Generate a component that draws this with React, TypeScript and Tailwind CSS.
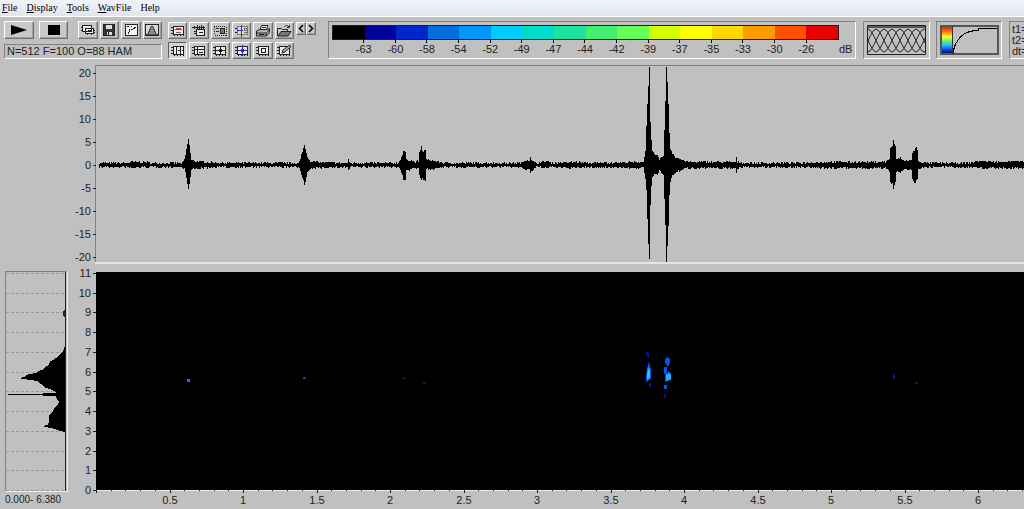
import React from 'react';

const MENU = ['File', 'Display', 'Tools', 'WavFile', 'Help'];

const SCALE = [
  { color: 'bg-black', label: '-63' },
  { color: 'bg-[#00009a]', label: '-60' },
  { color: 'bg-[#0026cc]', label: '-58' },
  { color: 'bg-[#0070dc]', label: '-54' },
  { color: 'bg-[#0098ff]', label: '-52' },
  { color: 'bg-[#00ccff]', label: '-49' },
  { color: 'bg-[#00dccc]', label: '-47' },
  { color: 'bg-[#1ce4a0]', label: '-44' },
  { color: 'bg-[#44ec70]', label: '-42' },
  { color: 'bg-[#66ff55]', label: '-39' },
  { color: 'bg-[#d4ff00]', label: '-37' },
  { color: 'bg-[#ffff00]', label: '-35' },
  { color: 'bg-[#ffd800]', label: '-33' },
  { color: 'bg-[#ff9c00]', label: '-30' },
  { color: 'bg-[#ff5000]', label: '-26' },
  { color: 'bg-[#e60000]', label: '' },
];

// x, amplitude above zero, amplitude below zero (pixels)
const ENVELOPE: [number, number, number][] = [
  [99, 2, 2], [125, 2, 2], [133, 3, 3], [146, 3, 2], [150, 2, 2], [182, 2, 2],
  [184, 5, 4], [185, 10, 8], [186, 16, 13], [187, 20, 18], [188, 26, 25], [189, 20, 20], [190, 12, 12], [191, 5, 5], [193, 4, 4], [205, 3, 3], [220, 2, 2],
  [298, 2, 2], [300, 6, 5], [301, 10, 9], [303, 16, 16], [304, 21, 20], [305, 16, 17], [307, 8, 8], [310, 4, 4], [316, 3, 3], [340, 2, 2],
  [347, 2, 2], [348, 5, 5], [350, 2, 2], [398, 2, 2],
  [400, 6, 5], [402, 10, 10], [403, 14, 15], [405, 13, 14], [406, 5, 5], [411, 5, 5], [414, 3, 2], [418, 4, 4],
  [419, 12, 10], [421, 18, 15], [422, 13, 14], [425, 15, 16], [426, 5, 4], [433, 4, 4], [445, 2, 2], [521, 2, 2],
  [525, 5, 5], [529, 5, 4], [530, 9, 9], [531, 4, 6], [536, 2, 2], [548, 4, 3], [550, 2, 2], [574, 3, 3], [590, 2, 2], [643, 3, 3],
  [645, 14, 14], [646, 38, 26], [647, 62, 54], [648, 80, 78], [649, 97, 94], [650, 42, 39], [651, 24, 22], [652, 14, 12],
  [655, 9, 9], [657, 11, 10], [659, 5, 5], [663, 9, 10], [664, 36, 34], [665, 64, 60], [666, 97, 97], [667, 82, 82],
  [668, 62, 60], [669, 32, 30], [670, 16, 17], [672, 12, 10], [675, 8, 7], [680, 6, 6], [686, 3, 3], [720, 3, 3],
  [735, 3, 3], [736, 7, 7], [737, 3, 3], [745, 2, 2], [800, 2, 2], [820, 3, 3], [885, 3, 3],
  [889, 6, 6], [890, 17, 17], [892, 19, 19], [893, 25, 23], [894, 20, 20], [895, 18, 18], [896, 6, 6], [900, 7, 7],
  [904, 4, 4], [911, 5, 5], [912, 13, 13], [914, 14, 18], [916, 18, 16], [917, 14, 14], [918, 4, 4], [924, 2, 2],
  [970, 2, 2], [978, 4, 3], [998, 3, 3], [1008, 4, 3], [1030, 3, 3],
];

function wavePath() {
  let seed = 7;
  const rand = () => {
    seed = (seed * 16807) % 2147483647;
    return seed / 2147483647;
  };
  let d = '';
  let i = 0;
  for (let x = 99; x < 1030; x++) {
    while (ENVELOPE[i + 1][0] < x) i++;
    const [x0, u0, d0] = ENVELOPE[i];
    const [x1, u1, d1] = ENVELOPE[i + 1];
    const t = (x - x0) / (x1 - x0);
    const up = Math.max(1, Math.round(u0 + (u1 - u0) * t + (rand() - 0.5) * 2));
    const down = Math.max(1, Math.round(d0 + (d1 - d0) * t + (rand() - 0.5) * 2));
    d += `M${x} ${165 - up}h1v${up + down}h-1z`;
  }
  return d;
}

const WAVE = wavePath();

const freqY = (f: number) => Math.round(490 - f * 19.75);
const timeX = (t: number) => Math.round(96 + t * 147);

const PANEL = 'shrink-0 border border-t-[#808080] border-l-[#808080] border-r-white border-b-white';
const RAISED =
  'flex items-center justify-center bg-[#c8c8c8] border border-t-white border-l-white border-r-[#707070] border-b-[#707070] shadow-[inset_-1px_-1px_0_#a0a0a0]';

type ToolProps = { label: string; children: React.ReactNode; pressed?: boolean; size?: string };

const Tool: React.FC<ToolProps> = ({ label, children, pressed, size = 'h-[17px]' }) => (
  <button
    type="button"
    aria-label={label}
    className={
      pressed
        ? `flex items-center justify-center bg-[#d4d4d4] border border-t-[#606060] border-l-[#606060] border-r-white border-b-white ${size}`
        : `${RAISED} ${size}`
    }
  >
    <svg className="shrink-0" width="16" height="14" viewBox="0 0 16 14" fill="none" stroke="#222" shapeRendering="crispEdges">
      {children}
    </svg>
  </button>
);

// plot frame with axis ticks that most of the tool icons are based on
const Frame = () => (
  <>
    <path fill="#eee" d="M3.5 2.5h10v8h-10z" />
    <path d="M1 3.5h2M1 6.5h2M1 9.5h2M4.5 11v1M7.5 11v1M10.5 11v1M13.5 11v1" />
  </>
);

const MenuBar = () => (
  <nav className="flex h-4 gap-[9px] bg-gradient-to-b from-[#f2f3fa] to-[#e2e4ee] pl-0.5 font-['Liberation_Serif',serif] text-[10px] leading-4 text-black">
    {MENU.map((m) => (
      <button key={m} type="button">
        {m === 'Help' ? m : <><span className="underline">{m[0]}</span>{m.slice(1)}</>}
      </button>
    ))}
  </nav>
);

const LeftTools = () => (
  <div className="w-[158px] shrink-0">
    <div className="flex justify-between">
      <div className="flex gap-[5px]">
        <button type="button" aria-label="Play" className={`${RAISED} h-[18px] w-[30px]`}>
          <svg width="18" height="10"><path d="M1 0v10L17 5z" /></svg>
        </button>
        <button type="button" aria-label="Stop" className={`${RAISED} h-[18px] w-[29px]`}>
          <svg width="12" height="10"><path d="M0 0h12v10H0z" /></svg>
        </button>
      </div>
      <div className="grid w-[84px] grid-cols-4 gap-0.5">
        <Tool label="Copy" size="h-[18px]">
          <path fill="#eee" d="M2.5 2.5h9v6h-9zM5.5 5.500h8v5h-8z" />
          <path d="M1 4.5h2M1 7.5h2M8 7.5h4M7.5 11v1M11.5 11v1M14 7.5h1M14 9.5h1" />
        </Tool>
        <Tool label="Save" size="h-[18px]">
          <path fill="#333" d="M2.5 1.5h11v11h-11z" />
          <path fill="#ddd" stroke="none" d="M5 2h6v4H5zM6 9h5v3H6z" />
          <path d="M7.5 9v3" />
        </Tool>
        <Tool label="Curve" size="h-[18px]">
          <path fill="#f4f4f4" d="M2.5 1.5h12v11h-12z" />
          <path d="M5.5 11V9M6.5 9V6M7.5 6.500h2M9.5 5.5h2M11 4.5h2M4 3.5h2M8 3.5h1" />
        </Tool>
        <Tool label="Window function" size="h-[18px]">
          <path fill="#ddd" d="M1.5 1.5h13v11h-13z" />
          <path fill="#888" shapeRendering="auto" d="M2 12c3 0 4-9 6-9s3 9 6 9z" />
        </Tool>
      </div>
    </div>
    <output className={`${PANEL} mt-[5px] block h-[15px] pl-0.5 leading-[13px]`}>N=512 F=100 O=88 HAM</output>
  </div>
);

const ViewTools = () => (
  <div className="mt-px grid w-[126px] shrink-0 grid-cols-6 gap-x-0.5 gap-y-[3px]">
    <Tool label="Title"><Frame /><path stroke="#d03030" d="M6 4.5h5M5 5.5h7" /><path stroke="#666" d="M6 8.5h5" /></Tool>
    <Tool label="Markers">
      <path fill="#eee" d="M5.5 5.5h8v6h-8z" />
      <path d="M1 3.5h13M3.5 2v3M6.5 1v4M8.5 2v3M10.5 1v4M12.5 2v3M3 7.5h2M3 9.5h2M8 8.5h4" />
    </Tool>
    <Tool label="Select region">
      <path strokeDasharray="1 1" d="M2 2.500h12M2.500 3v8M14.500 3v9M3 11.5h12" />
      <path fill="#777" d="M8.5 4.5h4v5h-4z" />
      <path d="M4 4.5h3M4 7.5h3" />
    </Tool>
    <Tool label="Synchronize">
      <path fill="#ddd" stroke="#777" d="M3.5 2.5h10v8h-10z" />
      <path d="M1 4.5h2M1 8.5h2" />
      <path stroke="#3030d0" d="M7.5 1v12M3 6.5h6" />
      <path stroke="#666" d="M13 4.5h-3v2h3v2h-3" />
    </Tool>
    <Tool label="Print">
      <g shapeRendering="auto">
        <path fill="#eee" d="M5 6l1.500-4.500H13L11.500 6z" />
        <path fill="#aaa" d="M1.500 7l3-1.500h8l2-1v4l-3 3.500h-10zM2 9h9l3.500-3M11 9v3" />
        <path d="M7 3.500h4M4 10.500h5" />
      </g>
    </Tool>
    <Tool label="Open">
      <g shapeRendering="auto">
        <path fill="#ccc" d="M1.500 12V4.500h4l1 1h5v2" />
        <path fill="#777" d="M2 12l3-4.500h10L12 12z" />
        <path d="M8.500 3c1-2 3-2 4.500 0M13.500 1v2.500H11" />
      </g>
    </Tool>
    <Tool label="Vertical cursors" pressed><Frame /><path d="M6.5 2v9M10.5 2v9M8 6.5h2M12 6.5h1" /></Tool>
    <Tool label="Horizontal cursor"><Frame /><path d="M3 5.5h10M6.5 3v7M8 8.5h4" /></Tool>
    <Tool label="Cross cursor"><Frame /><path d="M8.5 2v9M4 6.5h9M7 5.5h3M7 7.5h3" /></Tool>
    <Tool label="Linked cursor"><Frame /><path stroke="#2828c0" d="M8.5 1v11M3 6.5h11M7 5.5h3M7 7.5h3" /></Tool>
    <Tool label="Zoom box"><Frame /><path d="M6.5 4.5h4v4h-4z" /></Tool>
    <Tool label="Annotate">
      <Frame />
      <path shapeRendering="auto" fill="#aaa" d="M6 9l1-3 6.500-5L15 2.500 9 8z" />
    </Tool>
  </div>
);

const ColorScale = () => (
  <div className={`${PANEL} ml-3 h-[38px] w-[528px] pt-[3px] pl-[3px]`}>
    <div className="grid h-[15px] w-[507px] grid-cols-16 border border-[#202020]">
      {SCALE.map((s) => <div key={s.color} className={s.color} />)}
    </div>
    <div className="flex pl-4">
      <div className="grid w-[474px] grid-cols-15">
        {SCALE.slice(0, 15).map((s) => (
          <div key={s.label} className="flex flex-col items-center leading-3">
            <span className="h-[3px] w-px bg-black" />
            {s.label}
          </div>
        ))}
      </div>
      <span className="ml-[17px] pt-[3px] leading-3">dB</span>
    </div>
  </div>
);

function overlapCurves() {
  const curves: string[] = [];
  for (let i = -4; i < 8; i++) {
    const x = i * 8 + 1;
    curves.push(`M${x} 27C${x + 5} 27 ${x + 11} 4 ${x + 16} 4S${x + 27} 27 ${x + 32} 27`);
  }
  return curves.join('');
}

const OverlapPanel = () => (
  <div className={`${PANEL} ml-[7px] h-[38px] w-[67px] p-[3px]`}>
    <svg width="59" height="30" role="img" aria-label="Window overlap" fill="none" stroke="#222">
      <path d={overlapCurves()} />
      <path stroke="#555" strokeWidth="2" d="M0 2h59" />
      <path d="M.5.5h58v29H.5z" />
    </svg>
  </div>
);

const CurvePanel = () => (
  <div className={`${PANEL} ml-1.5 h-[38px] w-[66px] p-[3px]`}>
    <svg width="60" height="30" role="img" aria-label="Colour curve">
      <defs>
        <linearGradient id="rainbow" x1="0" y1="0" x2="0" y2="1">
          <stop offset="0" stopColor="#e01000" />
          <stop offset=".2" stopColor="#ff7020" />
          <stop offset=".38" stopColor="#ffff20" />
          <stop offset=".55" stopColor="#50f090" />
          <stop offset=".7" stopColor="#20b8ff" />
          <stop offset=".85" stopColor="#1040e0" />
          <stop offset="1" stopColor="#000060" />
        </linearGradient>
      </defs>
      <path fill="url(#rainbow)" d="M1 1h11v28H1z" />
      <g fill="none" stroke="#333" shapeRendering="crispEdges">
        <path strokeWidth="2" stroke="#555" d="M1 29V1h57v28z" />
        <path d="M12.5 1v28" />
        <path stroke="#000" d="M13.5 28v-3l1-3 1-3 2-3 2-3 2-2 2-1.500 3-2h2v-1h4v-1.500h6v-1.500h18" />
      </g>
    </svg>
  </div>
);

const Toolbar = () => (
  <header className="flex h-[46px] overflow-hidden border-t border-white bg-[#c0c0c0] pt-1 pl-1">
    <LeftTools />
    <div className="ml-1.5 flex shrink-0 items-start gap-0.5">
      <ViewTools />
      <div className="mt-px flex">
        {['Previous', 'Next'].map((name) => (
          <button key={name} type="button" aria-label={name} className={`${RAISED} h-[13px] w-2.5`}>
            <svg className="shrink-0" width="6" height="9" fill="none" stroke="#000" strokeWidth="1.5">
              <path d={name === 'Next' ? 'M1 1l3.5 3.5L1 8' : 'M5 1L1.500 4.500 5 8'} />
            </svg>
          </button>
        ))}
      </div>
    </div>
    <ColorScale />
    <OverlapPanel />
    <CurvePanel />
    <div className={`${PANEL} ml-[7px] h-[38px] w-24 pt-0.5 pl-0.5 leading-[11px]`}>
      <div>t1=</div>
      <div>t2=</div>
      <div>dt=</div>
    </div>
  </header>
);

const Waveform = () => (
  <svg className="block h-[206px] w-full" role="img" aria-label="Waveform" shapeRendering="crispEdges">
    <g transform="translate(0 -62)">
      <path fill="#808080" d="M95 65h2000v1H95zM95 65h1v197h-1z" />
      <path fill="#e4e4e4" d="M95 262h2000v2H95z" />
      {[20, 15, 10, 5, 0, -5, -10, -15, -20].map((v) => {
        const y = 165 - Math.round(v * 4.6);
        return (
          <g key={v} fill="#222">
            <path d={`M93 ${y}h3v1h-3z`} />
            <text x="91" y={y + 4} textAnchor="end">{v}</text>
          </g>
        );
      })}
      <path d={WAVE} />
    </g>
  </svg>
);

const Spectrum = () => (
  <div className="w-[70px] shrink-0">
    <svg className="block h-[225px] w-full" role="img" aria-label="Average spectrum" shapeRendering="crispEdges">
      <g transform="translate(0 -268)">
        <path stroke="#999" strokeDasharray="3 2" d={Array.from({ length: 12 }, (_, f) => `M6 ${freqY(f)}.5h59`).join('')} />
        <path fill="#808080" d="M5 271h62v1H5zM5 271h1v220H5z" />
        <path fill="#eee" d="M67 271h1v221h-1zM5 491h63v1H5z" />
        <path fill="#222" d="M65 272h1v219h-1zM63 312l1-2h1v7h-1l-1-2z" />
        <path d="M65 346L63 352 60 354 58 357 55 358 53 360 50 361 49 365 45 367 42 370 38 371 36 373 30 374 26 375 24 377 19 378 23 379 30 380 37 381 39 383 43 385 45 388 50 389 54 391 56 393H43V394H8V395H43V396H56L57 399 59 402 58 405 55 407 53 411 50 414 49 417V422L48 425 42 426 50 428 55 429 60 431 65 432z" />
      </g>
    </svg>
    <div className="pl-[5px] text-[10px] leading-[14px] whitespace-nowrap">0.000- 6.380</div>
  </div>
);

const Spectrogram = () => (
  <svg className="block h-[241px] min-w-0 flex-1" role="img" aria-label="Spectrogram" shapeRendering="crispEdges">
    <defs>
      <filter id="soft"><feGaussianBlur stdDeviation=".6" /></filter>
    </defs>
    <g transform="translate(-70 -268)">
      <path d="M96 272h2000v218H96z" />
      <path fill="#eee" d="M96 490h2000v1H96z" />
      <g fill="#222">
        {Array.from({ length: 12 }, (_, f) => (
          <g key={f}>
            <path d={`M93 ${freqY(f)}h3v1h-3z`} />
            <text x="91" y={freqY(f) + 4} textAnchor="end">{f}</text>
          </g>
        ))}
        {Array.from({ length: 64 }, (_, i) => (
          <path key={i} d={`M${timeX(i / 10)} 490h1v${i % 5 ? 1 : 3}h-1z`} />
        ))}
        {Array.from({ length: 12 }, (_, i) => (
          <text key={i} x={timeX((i + 1) / 2)} y="504" textAnchor="middle">{(i + 1) / 2}</text>
        ))}
      </g>
      <g filter="url(#soft)" shapeRendering="auto">
        <path fill="#0a0aa0" d="M646 351l3 2v5l-3-3zM648 362h2v5h-2zM649 383h2v4h-2zM893 373l2 2v5l-2-2z" />
        <path fill="#0a0a90" d="M403 377h3v2h-3zM423 382h3v2h-3zM915 382h3v2h-3zM664 394h2v4h-2z" />
        <path fill="#0058e8" d="M649 363l2 6v10l-5 3v-5l1-9zM665 359l3-2 2 2v4l-2 4-3-4zM664 367h3v7h-3zM669 371l2 3v6l-6 2v-7zM664 385h3v4h-3z" />
        <path fill="#20b0ff" d="M648 367l2 3v8l-3 2v-5zM666 375l3-2 2 2v4l-5 2z" />
        <path fill="#50c8f0" d="M648 371h1v5l-2 2z" />
        <path fill="#0878f0" d="M187 379h3v3h-3z" />
        <path fill="#0838d0" d="M303 377h3v2h-3z" />
      </g>
    </g>
  </svg>
);

export default function App() {
  return (
    <div className="min-h-screen overflow-hidden bg-[#c0c0c0] font-['Liberation_Sans',Arial,sans-serif] text-[11px] text-[#222]">
      <MenuBar />
      <Toolbar />
      <main>
        <Waveform />
        <section className="flex">
          <Spectrum />
          <Spectrogram />
        </section>
      </main>
    </div>
  );
}
